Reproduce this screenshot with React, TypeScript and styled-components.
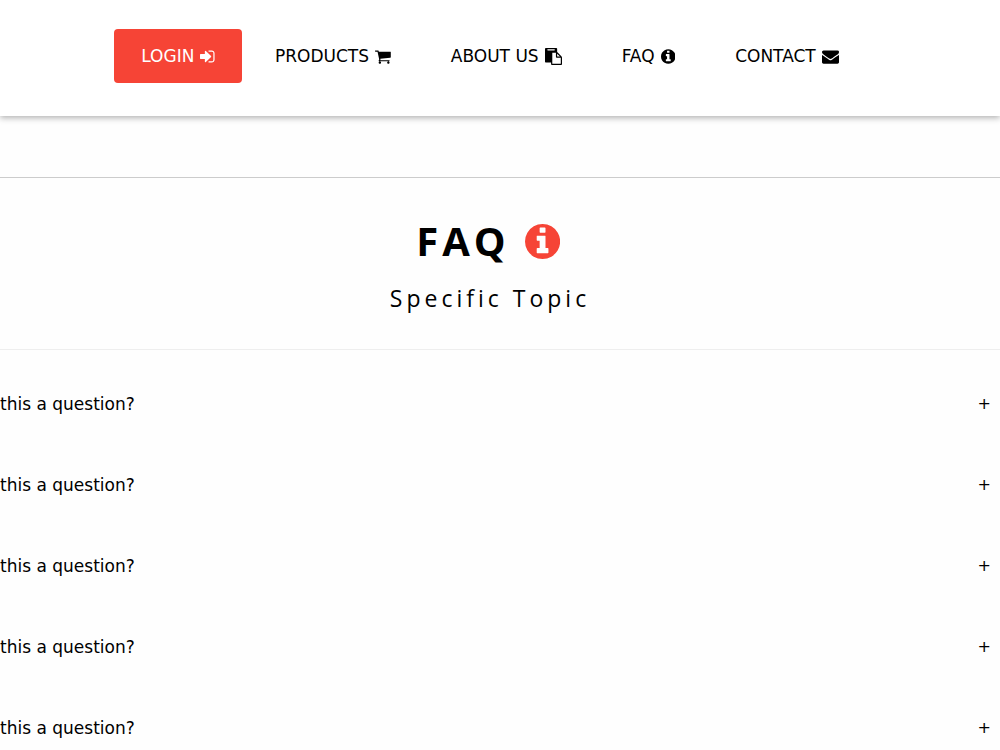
import React from "react";
import styled, { createGlobalStyle } from "styled-components";

const ICONS = {
  signIn:
    "M1312 896q0 26-19 45l-544 544q-19 19-45 19t-45-19-19-45v-288h-448q-26 0-45-19t-19-45v-384q0-26 19-45t45-19h448v-288q0-26 19-45t45-19 45 19l544 544q19 19 19 45zm352-352v704q0 119-84.500 203.500t-203.500 84.500h-320q-13 0-22.500-9.500t-9.500-22.500q0-4-1-20t-.5-26.500 3-23.500 10-19.500 20.500-6.500h320q66 0 113-47t47-113v-704q0-66-47-113t-113-47h-312l-11.500-1-11.500-3-8-5.500-7-9-2-13.500q0-4-1-20t-.5-26.500 3-23.500 10-19.500 20.500-6.500h320q119 0 203.500 84.500t84.500 203.500z",
  cart:
    "M704 1536q0 52-38 90t-90 38-90-38-38-90 38-90 90-38 90 38 38 90zm896 0q0 52-38 90t-90 38-90-38-38-90 38-90 90-38 90 38 38 90zm128-1088v512q0 24-16.500 42.500t-40.500 21.500l-1044 122q13 60 13 70 0 16-24 64h920q26 0 45 19t19 45-19 45-45 19h-1024q-26 0-45-19t-19-45q0-11 8-31.500t16-36 21.500-40 15.500-29.500l-177-823h-204q-26 0-45-19t-19-45 19-45 45-19h256q16 0 28.500 6.500t19.500 15.500 13 24.500 8 26 5.500 29.500 4.500 26h1201q26 0 45 19t19 45z",
  paste:
    "M768 1664h896v-640h-416q-40 0-68-28t-28-68v-416h-384v1152zm256-1440v-64q0-13-9.500-22.500t-22.500-9.500h-704q-13 0-22.500 9.500t-9.500 22.500v64q0 13 9.500 22.500t22.500 9.500h704q13 0 22.500-9.500t9.500-22.500zm256 672h299l-299-299v299zm512 128v672q0 40-28 68t-68 28h-960q-40 0-68-28t-28-68v-160h-544q-40 0-68-28t-28-68v-1344q0-40 28-68t68-28h1088q40 0 68 28t28 68v328q21 13 36 28l408 408q28 28 48 76t20 88z",
  info:
    "M1152 1376v-160q0-14-9-23t-23-9h-96v-512q0-14-9-23t-23-9h-320q-14 0-23 9t-9 23v160q0 14 9 23t23 9h96v320h-96q-14 0-23 9t-9 23v160q0 14 9 23t23 9h448q14 0 23-9t9-23zm-128-896v-160q0-14-9-23t-23-9h-192q-14 0-23 9t-9 23v160q0 14 9 23t23 9h192q14 0 23-9t9-23zm640 416q0 209-103 385.500t-279.500 279.500-385.500 103-385.500-103-279.500-279.500-103-385.500 103-385.500 279.500-279.500 385.500-103 385.500 103 279.500 279.500 103 385.500z",
  envelope:
    "M1792 710v794q0 66-47 113t-113 47h-1472q-66 0-113-47t-47-113v-794q44 49 101 87 362 246 497 345 57 42 92.500 65.500t94.500 48 110 24.500h2q51 0 110-24.500t94.500-48 92.500-65.500q170-123 498-345 57-39 100-87zm0-294q0 79-49 151t-122 123q-376 261-468 325-10 7-42.500 31t-54 38.500-52 32.500-57.500 27-50 9h-2q-23 0-50-9t-57.500-27-52-32.500-54-38.500-42.500-31q-91-64-262-182.500t-205-142.500q-62-42-117-115.500t-55-136.500q0-78 41.500-130t118.500-52h1472q65 0 112.500 47t47.500 113z",
};

type IconName = keyof typeof ICONS;

/* Part of the 1792-unit grid that each icon fills from side to side. */
const SPAN: Record<IconName, [number, number]> = {
  signIn: [128, 1536],
  cart: [64, 1664],
  paste: [0, 1792],
  info: [128, 1536],
  envelope: [0, 1792],
};

const GlobalStyle = createGlobalStyle`
  * { box-sizing: border-box; }
  body {
    margin: 0;
    background: #fefefe;
    color: #000;
    font-family: Verdana, "DejaVu Sans", sans-serif;
    font-size: 17px;
    overflow: hidden;
  }
`;

const Glyph = styled.svg<{ $size: number }>`
  height: ${(p) => p.$size}px;
  width: auto;
  flex: none;
  fill: currentColor;
`;

const Header = styled.header`
  background: #fff;
  padding: 29px 20px 33px 0;
  box-shadow: 0 2px 6px rgba(0, 0, 0, 0.3);
`;

const Nav = styled.nav`
  display: flex;
  justify-content: center;
  gap: 6px;
`;

const NavLink = styled.a<{ $primary?: boolean }>`
  display: flex;
  align-items: center;
  gap: 6px;
  height: 54px;
  padding: 0 27px;
  border-radius: 4px;
  white-space: nowrap;
  text-decoration: none;
  color: ${(p) => (p.$primary ? "#fff" : "#000")};
  background: ${(p) => (p.$primary ? "#f64436" : "transparent")};
`;

const Intro = styled.section`
  display: flex;
  flex-direction: column;
  align-items: center;
  margin-top: 61px;
  padding: 35px 20px 35px 0;
  border-top: 1px solid #ccc;
  border-bottom: 1px solid #eee;
  font-family: "Segoe UI", "Open Sans", sans-serif;
`;

const Title = styled.h1`
  display: flex;
  align-items: center;
  gap: 15px;
  margin: 0;
  font-size: 40px;
  line-height: 56px;
  font-weight: 700;
  letter-spacing: 4px;
`;

const TitleIcon = styled.span`
  display: flex;
  padding-right: 4px;
  color: #f64436;
`;

const Subtitle = styled.h2`
  margin: 13px 0 0;
  font-size: 23px;
  line-height: 32px;
  font-weight: 400;
  letter-spacing: 4px;
`;

const Questions = styled.div`
  padding-top: 13px;
`;

const Question = styled.button`
  display: flex;
  align-items: center;
  justify-content: space-between;
  width: 100%;
  height: 81px;
  padding: 0 9px 0 0;
  border: 0;
  background: none;
  color: #000;
  font: inherit;
  text-align: left;
`;

const Sign = styled.span`
  font-size: 16px;
`;

function Icon({ name, size = 17 }: { name: IconName; size?: number }) {
  const [start, width] = SPAN[name];
  return (
    <Glyph $size={size} viewBox={`${start} 0 ${width} 1792`} aria-hidden="true">
      <path d={ICONS[name]} />
    </Glyph>
  );
}

const LINKS: { label: string; icon: IconName }[] = [
  { label: "LOGIN", icon: "signIn" },
  { label: "PRODUCTS", icon: "cart" },
  { label: "ABOUT US", icon: "paste" },
  { label: "FAQ", icon: "info" },
  { label: "CONTACT", icon: "envelope" },
];

const QUESTIONS = Array.from({ length: 5 }, () => "this a question?");

export default function App() {
  return (
    <>
      <GlobalStyle />
      <Header>
        <Nav>
          {LINKS.map(({ label, icon }, i) => (
            <NavLink key={label} href="#" $primary={i === 0}>
              {label}
              <Icon name={icon} />
            </NavLink>
          ))}
        </Nav>
      </Header>
      <main>
        <Intro>
          <Title>
            FAQ
            <TitleIcon>
              <Icon name="info" size={41} />
            </TitleIcon>
          </Title>
          <Subtitle>Specific Topic</Subtitle>
        </Intro>
        <Questions>
          {QUESTIONS.map((text, i) => (
            <Question key={i} type="button" aria-expanded="false">
              <span>{text}</span>
              <Sign>+</Sign>
            </Question>
          ))}
        </Questions>
      </main>
    </>
  );
}
